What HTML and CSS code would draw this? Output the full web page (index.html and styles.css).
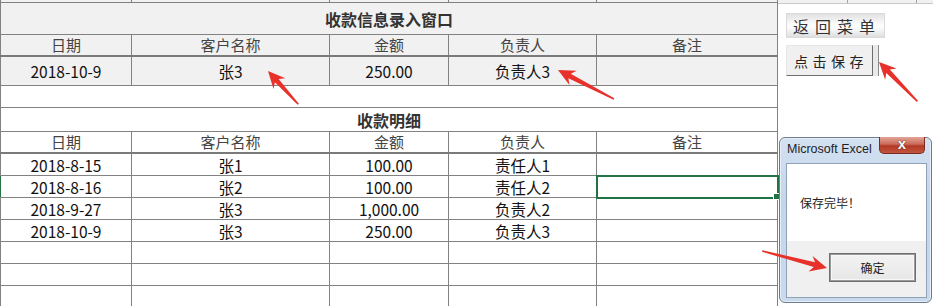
FILE: index.html
```html
<!DOCTYPE html>
<html lang="zh-CN">
  <head>
    <meta charset="UTF-8" />
    <meta name="viewport" content="width=device-width, initial-scale=1.0" />
    <title>收款信息录入</title>
    <link rel="stylesheet" href="styles.css">
  </head>
  <body>
    <div class="sheet">
      <table class="grid">
        <colgroup>
          <col class="c-date"><col class="c-name"><col class="c-amt"><col class="c-owner"><col class="c-note">
        </colgroup>
        <tr class="cut entry"><td></td><td></td><td></td><td></td><td class="sel-top"></td></tr>
        <tr class="title entry"><td colspan="5">收款信息录入窗口</td></tr>
        <tr class="head entry"><td>日期</td><td>客户名称</td><td>金额</td><td>负责人</td><td>备注</td></tr>
        <tr class="input entry"><td>2018-10-9</td><td>张3</td><td>250.00</td><td>负责人3</td><td></td></tr>
        <tr class="gap"><td colspan="5"></td></tr>
        <tr class="title"><td colspan="5">收款明细</td></tr>
        <tr class="head"><td>日期</td><td>客户名称</td><td>金额</td><td>负责人</td><td>备注</td></tr>
        <tr class="row"><td>2018-8-15</td><td>张1</td><td>100.00</td><td>责任人1</td><td></td></tr>
        <tr class="row"><td class="row-mark">2018-8-16</td><td>张2</td><td>100.00</td><td>责任人2</td><td class="selected"></td></tr>
        <tr class="row"><td>2018-9-27</td><td>张3</td><td>1,000.00</td><td>负责人2</td><td></td></tr>
        <tr class="row"><td>2018-10-9</td><td>张3</td><td>250.00</td><td>负责人3</td><td></td></tr>
        <tr class="row"><td></td><td></td><td></td><td></td><td></td></tr>
        <tr class="row"><td></td><td></td><td></td><td></td><td></td></tr>
        <tr class="row"><td></td><td></td><td></td><td></td><td></td></tr>
      </table>
      <aside class="side">
        <div class="side-cut"><span></span><span></span></div>
        <button class="btn-menu">返回菜单</button>
        <button class="btn-save">点击保存</button>
      </aside>
    </div>

    <div class="msgbox">
      <div class="msg-title">Microsoft Excel</div>
      <div class="msg-close">x</div>
      <div class="msg-client">
        <div class="msg-text">保存完毕！</div>
        <div class="msg-foot"><button class="msg-ok">确定</button></div>
      </div>
    </div>

    <svg class="marks" width="933" height="306" viewBox="0 0 933 306">
      <g fill="#e8312a">
        <polygon transform="translate(268 71) rotate(-132.3)" points="0,0 -17,-8 -13,-2.5 -45,-0.8 -45,0.8 -13,2.5 -17,8"/>
        <polygon transform="translate(558 70) rotate(-152.6)" points="0,0 -17,-8 -13,-2.5 -63,-0.8 -63,0.8 -13,2.5 -17,8"/>
        <polygon transform="translate(879 62) rotate(-134.3)" points="0,0 -17,-8 -13,-2.5 -55,-0.8 -55,0.8 -13,2.5 -17,8"/>
        <polygon transform="translate(827 268) rotate(14.7)" points="0,0 -17,-8 -13,-2.5 -67,-0.8 -67,0.8 -13,2.5 -17,8"/>
      </g>
    </svg>
  </body>
</html>
```

FILE: styles.css
```css
body {
  margin: 0;
  width: 933px;
  height: 306px;
  overflow: hidden;
  background: white;
  font-family: "Noto Sans CJK SC", sans-serif;
  position: relative;
}
.sheet {
  display: flex;
  align-items: flex-start;
}
.grid {
  border-collapse: collapse;
  table-layout: fixed;
  width: 778px;
  flex: none;
  font-size: 15px;
  color: #111;
}
.c-date { width: 131px; }
.c-name { width: 198px; }
.c-amt { width: 119px; }
.c-owner { width: 148px; }
.c-note { width: 181px; }
.grid td {
  border: 1px solid #828282;
  padding: 0;
  text-align: center;
  line-height: 20px;
  white-space: nowrap;
}
.grid tr.input td,
.grid tr.row td {
  font-size: 15.5px;
}
.grid tr.entry td {
  background: #f1f1f1;
}
.grid tr.cut td {
  height: 2px;
  border-top: none;
}
.grid td.sel-top {
  background: linear-gradient(#217346 0 2px, #f1f1f1 2px);
}
.grid tr.title td {
  height: 31px;
  font-size: 16px;
  font-weight: bold;
  color: #333;
}
.grid tr.title:not(.entry) td {
  height: 23px;
}
.grid tr.head td {
  height: 20px;
  color: #444;
  border-bottom: 2px solid #7a7a7a;
}
.grid tr.input td {
  height: 28px;
}
.grid tr.gap td {
  height: 21px;
}
.grid tr.row td {
  height: 21px;
}
.grid td.selected {
  outline: 2px solid #217346;
  outline-offset: -1px;
  position: relative;
}
.grid td.selected::after {
  content: "";
  position: absolute;
  right: -3px;
  bottom: -3px;
  width: 5px;
  height: 5px;
  background: #217346;
  border: 1px solid white;
}
.grid td.row-mark {
  border-left-color: #217346;
}
.side {
  flex: 1;
  display: flex;
  flex-direction: column;
  align-items: flex-start;
}
.side-cut {
  align-self: stretch;
  height: 3px;
  background: #f1f1f1;
  border-bottom: 1px solid #c8c8c8;
  display: flex;
  gap: 68px;
  padding-left: 69px;
}
.side-cut span {
  width: 1px;
  background: #a0a0a0;
}
.btn-menu {
  margin: 9px 0 0 8px;
  width: 99px;
  height: 25px;
  border: 1px solid #dadada;
  background: linear-gradient(#e2e2e2, #fbfbfb 45%, #fbfbfb 60%, #dedede);
  font-family: "Noto Sans CJK SC", sans-serif;
  font-size: 16px;
  color: #333;
  letter-spacing: 6px;
  white-space: nowrap;
  padding: 0 0 0 6px;
  text-align: left;
  line-height: 22px;
}
.btn-save {
  margin: 7px 0 0 8px;
  width: 87px;
  height: 31px;
  border: 1px solid;
  border-color: #e6e6e6 #6e6e6e #6e6e6e #e6e6e6;
  background: #f0f0f0;
  box-shadow: 5px 0 0 #e9e9e9, 6px 0 0 #8a8a8a;
  font-family: "Noto Sans CJK SC", sans-serif;
  font-size: 14px;
  color: #222;
  letter-spacing: 4.5px;
  white-space: nowrap;
  padding: 0 0 0 7px;
  text-align: left;
}
.msgbox {
  position: absolute;
  left: 779px;
  top: 137px;
  width: 153px;
  height: 166px;
  box-sizing: border-box;
  border: 1px solid #6c7c8e;
  border-radius: 6px;
  background: linear-gradient(#d3e1f1, #c3d5ea 40%, #c9daee);
  box-shadow: inset 0 0 0 1px #e6eef8;
}
.msg-title {
  position: absolute;
  left: 7px;
  top: 4px;
  font-family: "Liberation Sans", sans-serif;
  font-size: 12.5px;
  color: #1e1e1e;
}
.msg-close {
  position: absolute;
  left: 99px;
  top: -1px;
  width: 46px;
  height: 17px;
  box-sizing: border-box;
  border: 1px solid #7a2a20;
  border-top: none;
  border-radius: 0 0 5px 5px;
  background: linear-gradient(#e2a597, #cb6a58 45%, #b23a26 55%, #c2543f);
  color: white;
  font-family: "Liberation Sans", sans-serif;
  font-weight: bold;
  font-size: 15px;
  line-height: 14px;
  text-align: center;
  text-shadow: 0 0 1px #5a1a10, 0 0 1px #5a1a10;
}
.msg-client {
  position: absolute;
  left: 6px;
  top: 25px;
  width: 141px;
  height: 135px;
  box-sizing: border-box;
  border: 1px solid #90a1b6;
  background: white;
  display: flex;
  flex-direction: column;
}
.msg-text {
  height: 77px;
  padding-left: 13px;
  font-size: 12px;
  line-height: 78px;
  color: #222;
}
.msg-foot {
  flex: 1;
  background: #f0f0f0;
  padding: 12px 0 0 42px;
}
.msg-ok {
  width: 87px;
  height: 29px;
  border: 1px solid #6f6f6f;
  box-shadow: inset 0 0 0 1px #9a9a9a, inset 0 0 0 2px #f8f8f8;
  background: linear-gradient(#f3f3f3, #e6e6e6);
  font-family: "Noto Sans CJK SC", sans-serif;
  font-size: 12px;
  color: #222;
  padding: 0;
}
.marks {
  position: absolute;
  left: 0;
  top: 0;
  pointer-events: none;
}
```
